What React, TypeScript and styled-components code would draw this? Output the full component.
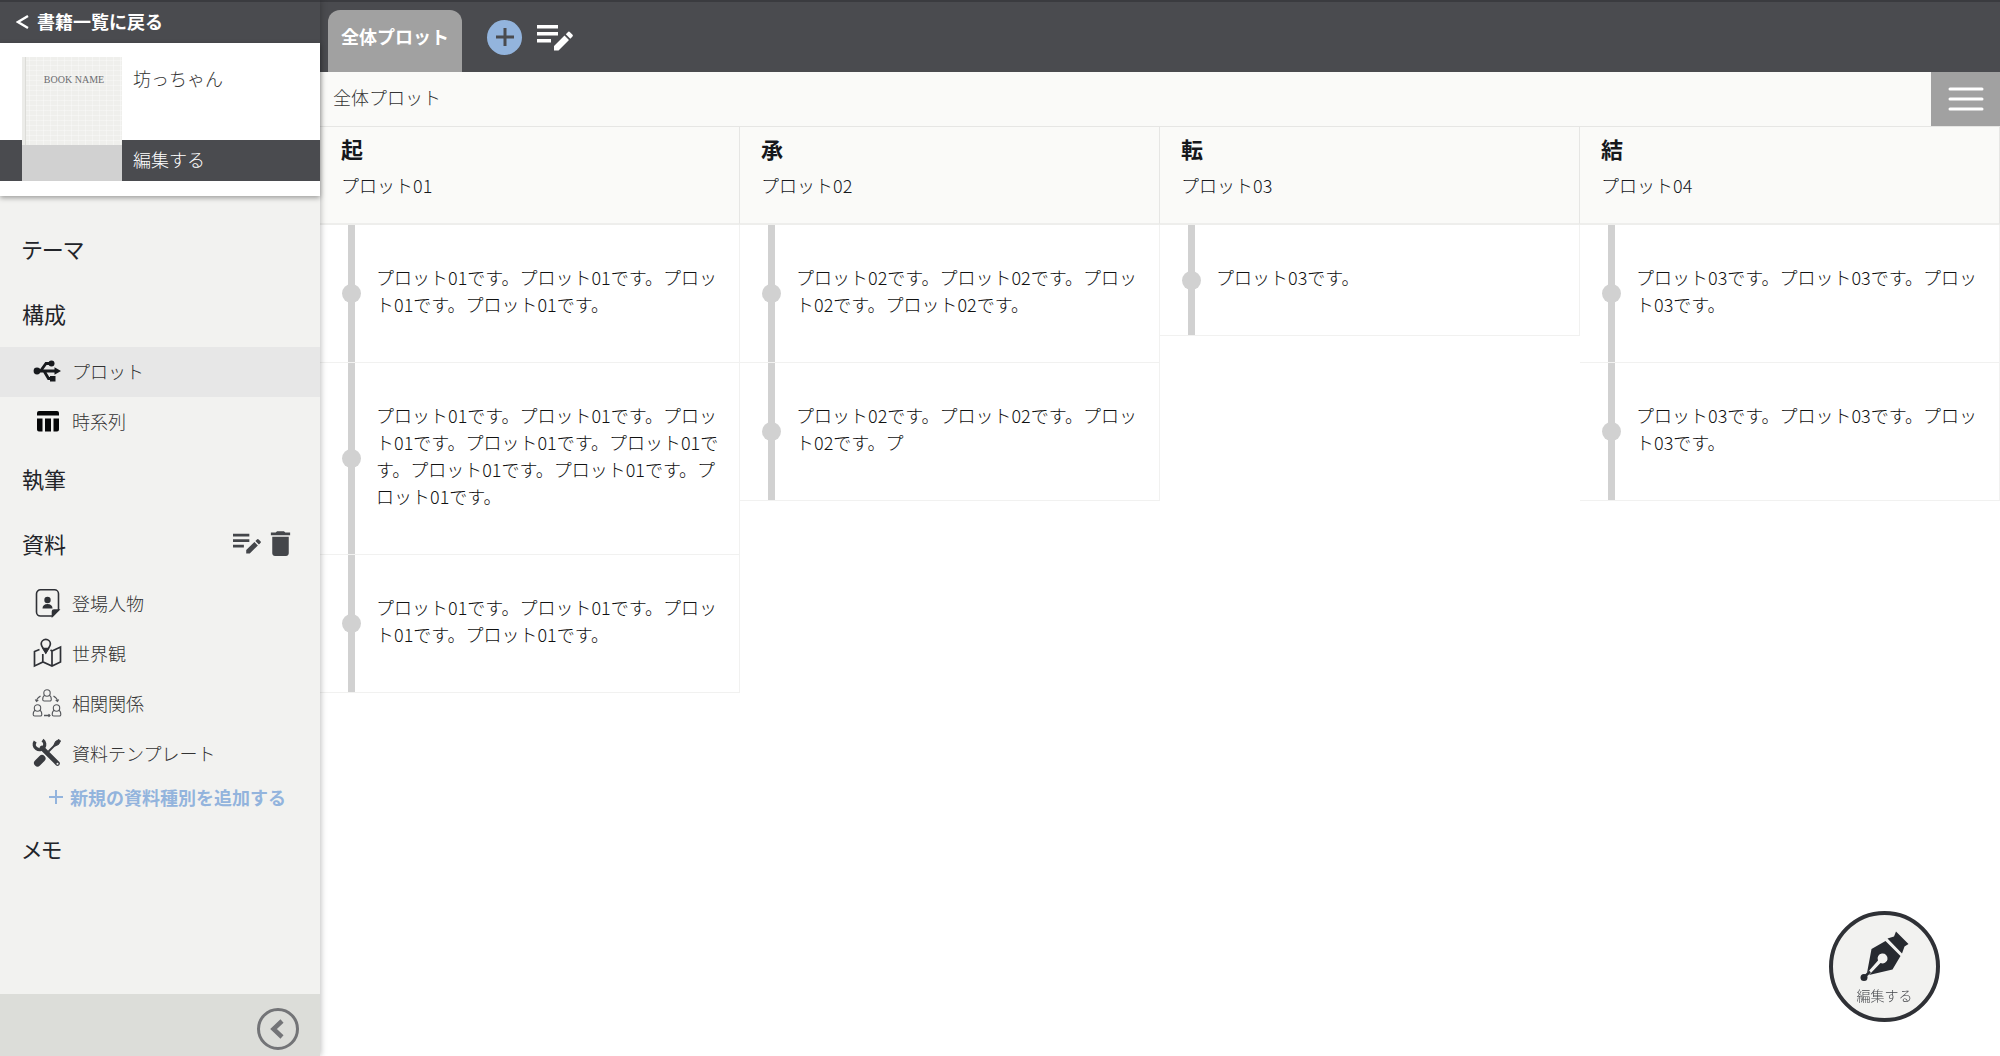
import React from "react";
import styled, { createGlobalStyle } from "styled-components";
import { MdDelete } from "react-icons/md";

const GlobalStyle = createGlobalStyle`
  *, *::before, *::after { box-sizing: border-box; }
  body {
    margin: 0;
    background: #fff;
    color: #16181c;
    font-family: "Noto Sans CJK JP", "Noto Sans", sans-serif;
    font-size: 18px;
    font-weight: 300;
    line-height: 27px;
  }
  h1, h2, h3, p, ul { margin: 0; padding: 0; font-size: inherit; font-weight: inherit; }
  ul { list-style: none; }
  button { font: inherit; color: inherit; border: 0; padding: 0; background: none; cursor: pointer; }
  a { color: inherit; text-decoration: none; }
  svg { display: block; flex: none; }
`;

const Shell = styled.div`
  display: grid;
  grid-template-columns: 320px minmax(0, 1fr);
  min-height: 100vh;
`;

const Sidebar = styled.aside`
  display: flex;
  flex-direction: column;
  background: #f2f2f0;
  box-shadow: 1px 0 6px rgba(0, 0, 0, 0.25);
  z-index: 1;
`;

const BackLink = styled.a`
  display: flex;
  align-items: center;
  gap: 8px;
  height: 43px;
  padding: 0 16px 2px;
  background: #4a4b4f;
  border-top: 2px solid #3a3b3f;
  color: #fff;
  font-weight: 700;
`;

const BookPanel = styled.section`
  display: grid;
  grid-template-columns: 22px 100px 1fr;
  grid-template-rows: 83px 41px;
  padding: 14px 0 15px;
  background: #fff;
  box-shadow: 0 2px 5px rgba(0, 0, 0, 0.35);
`;

const Cover = styled.div`
  grid-column: 2;
  grid-row: 1 / 3;
  display: flex;
  flex-direction: column;
  justify-content: space-between;
  z-index: 1;
  background:
    linear-gradient(90deg, #ecece9 0 3px, #dcdcd8 3px 4px, transparent 4px),
    repeating-linear-gradient(0deg, rgba(255, 255, 255, 0.3) 0 1px, transparent 1px 5px),
    repeating-linear-gradient(90deg, rgba(255, 255, 255, 0.3) 0 1px, transparent 1px 7px),
    #efefec;
`;

const CoverTitle = styled.span`
  padding: 15px 0 0 4px;
  color: #6c6d70;
  font-family: "Liberation Serif", serif;
  font-size: 10px;
  font-weight: 400;
  line-height: 16px;
  text-align: center;
`;

const CoverShade = styled.span`
  height: 36px;
  background: #d1d1d1;
`;

const BookName = styled.h1`
  grid-column: 3;
  grid-row: 1;
  padding: 8px 11px;
  color: #333;
`;

const BookEdit = styled.button`
  grid-column: 1 / 4;
  grid-row: 2;
  padding: 0 0 2px 133px;
  background: #4a4b4f;
  color: #fff;
  text-align: left;
`;

const Nav = styled.nav`
  flex: 1;
  padding-top: 21px;
`;

const GroupHead = styled.div`
  display: flex;
  align-items: center;
  justify-content: space-between;
  height: 65px;
  padding: 0 23px 2px 22px;
  color: #222429;
  font-size: 22px;
  font-weight: 400;
  font-feature-settings: "palt";
`;

const GroupTools = styled.div`
  display: flex;
  align-items: center;
  gap: 3px;
  color: #44464a;
`;

const MaterialList = styled.div`
  padding-top: 2px;
`;

const NavItem = styled.a<{ $active?: boolean }>`
  display: flex;
  align-items: center;
  gap: 10px;
  height: 50px;
  padding: 0 0 2px 32px;
  background: ${(p) => (p.$active ? "#e7e7e7" : "transparent")};
  color: #333;
`;

const AddKind = styled.button`
  display: flex;
  align-items: center;
  gap: 7px;
  height: 38px;
  padding: 0 0 2px 49px;
  color: #93b4dd;
  font-weight: 700;
`;

const SideFoot = styled.div`
  display: flex;
  align-items: center;
  justify-content: flex-end;
  height: 62px;
  padding: 8px 20px 0 0;
  background: #dcddd9;
`;

const Main = styled.main`
  display: flex;
  flex-direction: column;
`;

const TabBar = styled.header`
  display: flex;
  align-items: center;
  height: 72px;
  padding-left: 8px;
  background: #4a4b4f;
  border-top: 2px solid #3a3b3f;
  color: #fff;
`;

const Tab = styled.button`
  align-self: flex-end;
  height: 62px;
  margin-right: 25px;
  padding: 0 13px 10px;
  border-radius: 12px 12px 0 0;
  background: #a1a1a1;
  color: #fff;
  font-weight: 700;
`;

const AddTab = styled.button`
  display: grid;
  place-items: center;
  width: 35px;
  height: 35px;
  margin-right: 15px;
  border-radius: 50%;
  background: #93b4dd;
`;

const TitleBar = styled.div`
  display: flex;
  align-items: center;
  justify-content: space-between;
  height: 55px;
  padding-left: 13px;
  border-bottom: 1px solid #e6e6e4;
  background: #fafaf8;
  color: #333;
`;

const BoardTitle = styled.h1`
  padding-bottom: 3px;
`;

const MenuButton = styled.button`
  display: grid;
  place-items: center;
  align-self: stretch;
  width: 69px;
  background: #a1a1a1;
`;

const Board = styled.div`
  display: grid;
  grid-template-columns: repeat(4, minmax(0, 1fr));
  align-items: start;
`;

const ColumnHead = styled.header`
  height: 98px;
  padding: 5px 21px;
  border-right: 1px solid #e6e6e4;
  border-bottom: 2px solid #eeeeec;
  background: #fafaf8;
`;

const ColumnMark = styled.h2`
  && { font-size: 22px; font-weight: 700; }
  line-height: 32px;
  margin-bottom: 8px;
`;

const Card = styled.li`
  display: grid;
  grid-template-columns: 19px 1fr;
  gap: 15px;
  padding: 0 18px 0 22px;
  border-right: 1px solid #f1f1f0;
  border-bottom: 1px solid #f1f1f0;
`;

const Rail = styled.span`
  display: grid;
  place-items: center;
  background: linear-gradient(#d1d1d1, #d1d1d1) center / 7px 100% no-repeat;

  &::after {
    content: "";
    width: 19px;
    height: 19px;
    border-radius: 50%;
    background: #d1d1d1;
  }
`;

const CardText = styled.p`
  padding: 39px 0 44px;
  color: #111;
  word-break: break-all;
`;

const EditFab = styled.button`
  position: fixed;
  right: 60px;
  bottom: 34px;
  display: flex;
  flex-direction: column;
  align-items: center;
  gap: 3px;
  width: 111px;
  height: 111px;
  padding-top: 15px;
  border: 4px solid #2f3136;
  border-radius: 50%;
  background: #f2f2f0;
  color: #44464a;
  font-size: 14px;
  line-height: 20px;
`;

const EditListIcon = ({ width }: { width: number }) => (
  <svg width={width} viewBox="0 0 36 27" fill="currentColor">
    <path d="M0 1h21v3.500H0zM0 8h21v3.500H0zM0 15h14v3.500H0z" />
    <path d="M17 26.500v-4.500l10.500-10.500 4.500 4.500-10.500 10.500zM28.800 10.200l2-2a1.500 1.500 0 0 1 2.200 0l2.300 2.300a1.500 1.500 0 0 1 0 2.200l-2 2z" />
  </svg>
);

const PlotIcon = () => (
  <svg width="30" height="28" viewBox="0 0 30 28" fill="none" stroke="#17191d" strokeWidth="2.800">
    <path d="M5 14h19M8.500 14l5.500-7.500h5M12 14l4.500 7.500h4" />
    <circle cx="5" cy="14" r="3.400" fill="#17191d" stroke="none" />
    <circle cx="19.500" cy="6.500" r="3" fill="#17191d" stroke="none" />
    <path d="M18 19h5.500v5.500H18zM22.500 10.200l6.500 3.800-6.500 3.800z" fill="#17191d" stroke="none" />
  </svg>
);

const TimelineIcon = () => (
  <svg width="30" height="28" viewBox="0 0 30 28" fill="#060708">
    <path d="M5 8.500V6a2 2 0 0 1 2-2h18a2 2 0 0 1 2 2v2.500zM5 11.500h5.500V24.500H7a2 2 0 0 1-2-2zM13 11.500h6v13h-6zM21.500 11.500H27v11a2 2 0 0 1-2 2h-3.500z" />
  </svg>
);

const PersonIcon = () => (
  <svg width="30" height="30" viewBox="0 0 30 30" fill="none" stroke="#2f3136" strokeWidth="1.600">
    <path d="M8.500 1.800h14a4 4 0 0 1 4 4V22l-6 6h-12a4 4 0 0 1-4-4V5.800a4 4 0 0 1 4-4z" />
    <path d="M20.500 28v-4.500a1.500 1.500 0 0 1 1.500-1.500h4.500z" fill="#2f3136" />
    <circle cx="15.500" cy="12" r="3.200" fill="#2f3136" stroke="none" />
    <path d="M10.500 20.500c0-3 2-4.500 5-4.500s5 1.500 5 4.500z" fill="#2f3136" stroke="none" />
  </svg>
);

const MapIcon = () => (
  <svg width="30" height="30" viewBox="0 0 30 30" fill="none" stroke="#2f3136" strokeWidth="1.700">
    <path d="M7.500 11.500l-5 2V28l8.500-4 9 4 8.500-4V9l-8.500 4-1.500-1M10.800 16v8M20 13v15" />
    <path d="M13.800 14.500C11.500 10.500 9.200 8.500 9.200 6a4.600 4.600 0 0 1 9.200 0c0 2.500-2.300 4.500-4.600 8.500z" />
    <path d="M13.800 14.500l-2.300-4h4.600z" fill="#2f3136" />
  </svg>
);

const RelationIcon = () => (
  <svg width="30" height="30" viewBox="0 0 30 30" fill="none" stroke="#55575b" strokeWidth="1.100">
    {[[15, 1], [5.5, 16], [24.5, 16]].map(([x, y]) => (
      <g key={x} transform={`translate(${x} ${y})`}>
        <circle cx="0" cy="4" r="3.200" />
        <path d="M-2.300 6.300C-4 7-4.300 8.500-4.300 10.500q0 1.500 1.500 1.500h5.600q1.500 0 1.500-1.500C4.300 8.500 4 7 2.300 6.300" />
      </g>
    ))}
    <path d="M8.500 8Q5 10 4.500 13M21.500 8Q25 10 25.500 13M12 27.500h6" strokeWidth="1.400" />
    <path d="M3.300 11.500L4.500 13.500 6.300 12M23.700 12l1.800 1.500 1.200-2M16.500 26.200l1.500 1.300-1.500 1.300" />
  </svg>
);

const ToolsIcon = () => (
  <svg width="30" height="30" viewBox="0 0 30 30" fill="none" stroke="#3a3c40" strokeLinecap="round">
    <path d="M10 10l15.500 15.500" strokeWidth="4.600" />
    <path d="M3.200 3.500a5.200 5.200 0 1 0 7.300-1.300" strokeWidth="3.400" strokeLinecap="butt" />
    <path d="M5.500 25l4.500-4.500" strokeWidth="7" />
    <path d="M17 13l6-6" strokeWidth="2" />
    <path d="M22 7l1.500-3.500L27 1.500 28.500 3 26.500 6.500 23 8z" fill="#3a3c40" strokeWidth="1" />
    <circle cx="25.500" cy="25.800" r="1" fill="#f2f2f0" stroke="none" />
  </svg>
);

const NibIcon = () => (
  <svg width="52" height="52" viewBox="0 0 52 52" fill="#272a30">
    <path d="M37 1.500L49.500 14l-4 2.500-2.500 7L28.500 8.500l6.500-2z" />
    <path d="M26.500 11L41.500 26l-8 13.500L10 45l11.500-12a5 5 0 1 0-2.500-2.500L8 43l4.500-24z" />
    <circle cx="5" cy="47.500" r="3.500" />
    <path d="M5 47.500l6-6" stroke="#272a30" strokeWidth="2.500" />
  </svg>
);

const columns = [
  {
    mark: "起",
    name: "プロット01",
    cards: [
      "プロット01です。プロット01です。プロット01です。プロット01です。",
      "プロット01です。プロット01です。プロット01です。プロット01です。プロット01です。プロット01です。プロット01です。プロット01です。",
      "プロット01です。プロット01です。プロット01です。プロット01です。",
    ],
  },
  {
    mark: "承",
    name: "プロット02",
    cards: [
      "プロット02です。プロット02です。プロット02です。プロット02です。",
      "プロット02です。プロット02です。プロット02です。プ",
    ],
  },
  { mark: "転", name: "プロット03", cards: ["プロット03です。"] },
  {
    mark: "結",
    name: "プロット04",
    cards: ["プロット03です。プロット03です。プロット03です。", "プロット03です。プロット03です。プロット03です。"],
  },
];

export default function App() {
  return (
    <>
      <GlobalStyle />
      <Shell>
        <Sidebar>
          <BackLink href="#books">
            <svg width="13" height="16" viewBox="0 0 13 16" fill="none" stroke="currentColor" strokeWidth="2.400">
              <path d="M12 2L2 8l10 6" />
            </svg>
            書籍一覧に戻る
          </BackLink>
          <BookPanel>
            <Cover>
              <CoverTitle>BOOK NAME</CoverTitle>
              <CoverShade />
            </Cover>
            <BookName>坊っちゃん</BookName>
            <BookEdit>編集する</BookEdit>
          </BookPanel>
          <Nav>
            <GroupHead><a href="#theme">テーマ</a></GroupHead>
            <GroupHead><h2>構成</h2></GroupHead>
            <NavItem href="#plot" $active><PlotIcon />プロット</NavItem>
            <NavItem href="#timeline"><TimelineIcon />時系列</NavItem>
            <GroupHead><a href="#writing">執筆</a></GroupHead>
            <GroupHead>
              <h2>資料</h2>
              <GroupTools>
                <button aria-label="資料を編集"><EditListIcon width={28} /></button>
                <button aria-label="資料を削除"><MdDelete size={33} /></button>
              </GroupTools>
            </GroupHead>
            <MaterialList>
              <NavItem href="#people"><PersonIcon />登場人物</NavItem>
              <NavItem href="#world"><MapIcon />世界観</NavItem>
              <NavItem href="#relations"><RelationIcon />相関関係</NavItem>
              <NavItem href="#templates"><ToolsIcon />資料テンプレート</NavItem>
              <AddKind>
                <svg width="14" height="14" viewBox="0 0 14 14" stroke="currentColor" strokeWidth="2">
                  <path d="M7 0v14M0 7h14" />
                </svg>
                新規の資料種別を追加する
              </AddKind>
            </MaterialList>
            <GroupHead><a href="#memo">メモ</a></GroupHead>
          </Nav>
          <SideFoot>
            <button aria-label="サイドバーを閉じる">
              <svg width="44" height="44" viewBox="0 0 44 44" fill="none" stroke="#737477">
                <circle cx="22" cy="22" r="19.500" strokeWidth="3" />
                <path d="M26 14l-8.500 8 8.500 8" strokeWidth="4.500" />
              </svg>
            </button>
          </SideFoot>
        </Sidebar>
        <Main>
          <TabBar>
            <Tab>全体プロット</Tab>
            <AddTab aria-label="タブを追加">
              <svg width="18" height="18" viewBox="0 0 18 18" stroke="#4a4b4f" strokeWidth="3">
                <path d="M9 0v18M0 9h18" />
              </svg>
            </AddTab>
            <button aria-label="タブを編集"><EditListIcon width={36} /></button>
          </TabBar>
          <TitleBar>
            <BoardTitle>全体プロット</BoardTitle>
            <MenuButton aria-label="メニュー">
              <svg width="36" height="24" viewBox="0 0 36 24" stroke="#fff" strokeWidth="3" strokeLinecap="round">
                <path d="M2 2h32M2 12h32M2 22h32" />
              </svg>
            </MenuButton>
          </TitleBar>
          <Board>
            {columns.map((column) => (
              <section key={column.mark}>
                <ColumnHead>
                  <ColumnMark>{column.mark}</ColumnMark>
                  <p>{column.name}</p>
                </ColumnHead>
                <ul>
                  {column.cards.map((text, i) => (
                    <Card key={i}>
                      <Rail />
                      <CardText>{text}</CardText>
                    </Card>
                  ))}
                </ul>
              </section>
            ))}
          </Board>
        </Main>
      </Shell>
      <EditFab>
        <NibIcon />
        <span>編集する</span>
      </EditFab>
    </>
  );
}
